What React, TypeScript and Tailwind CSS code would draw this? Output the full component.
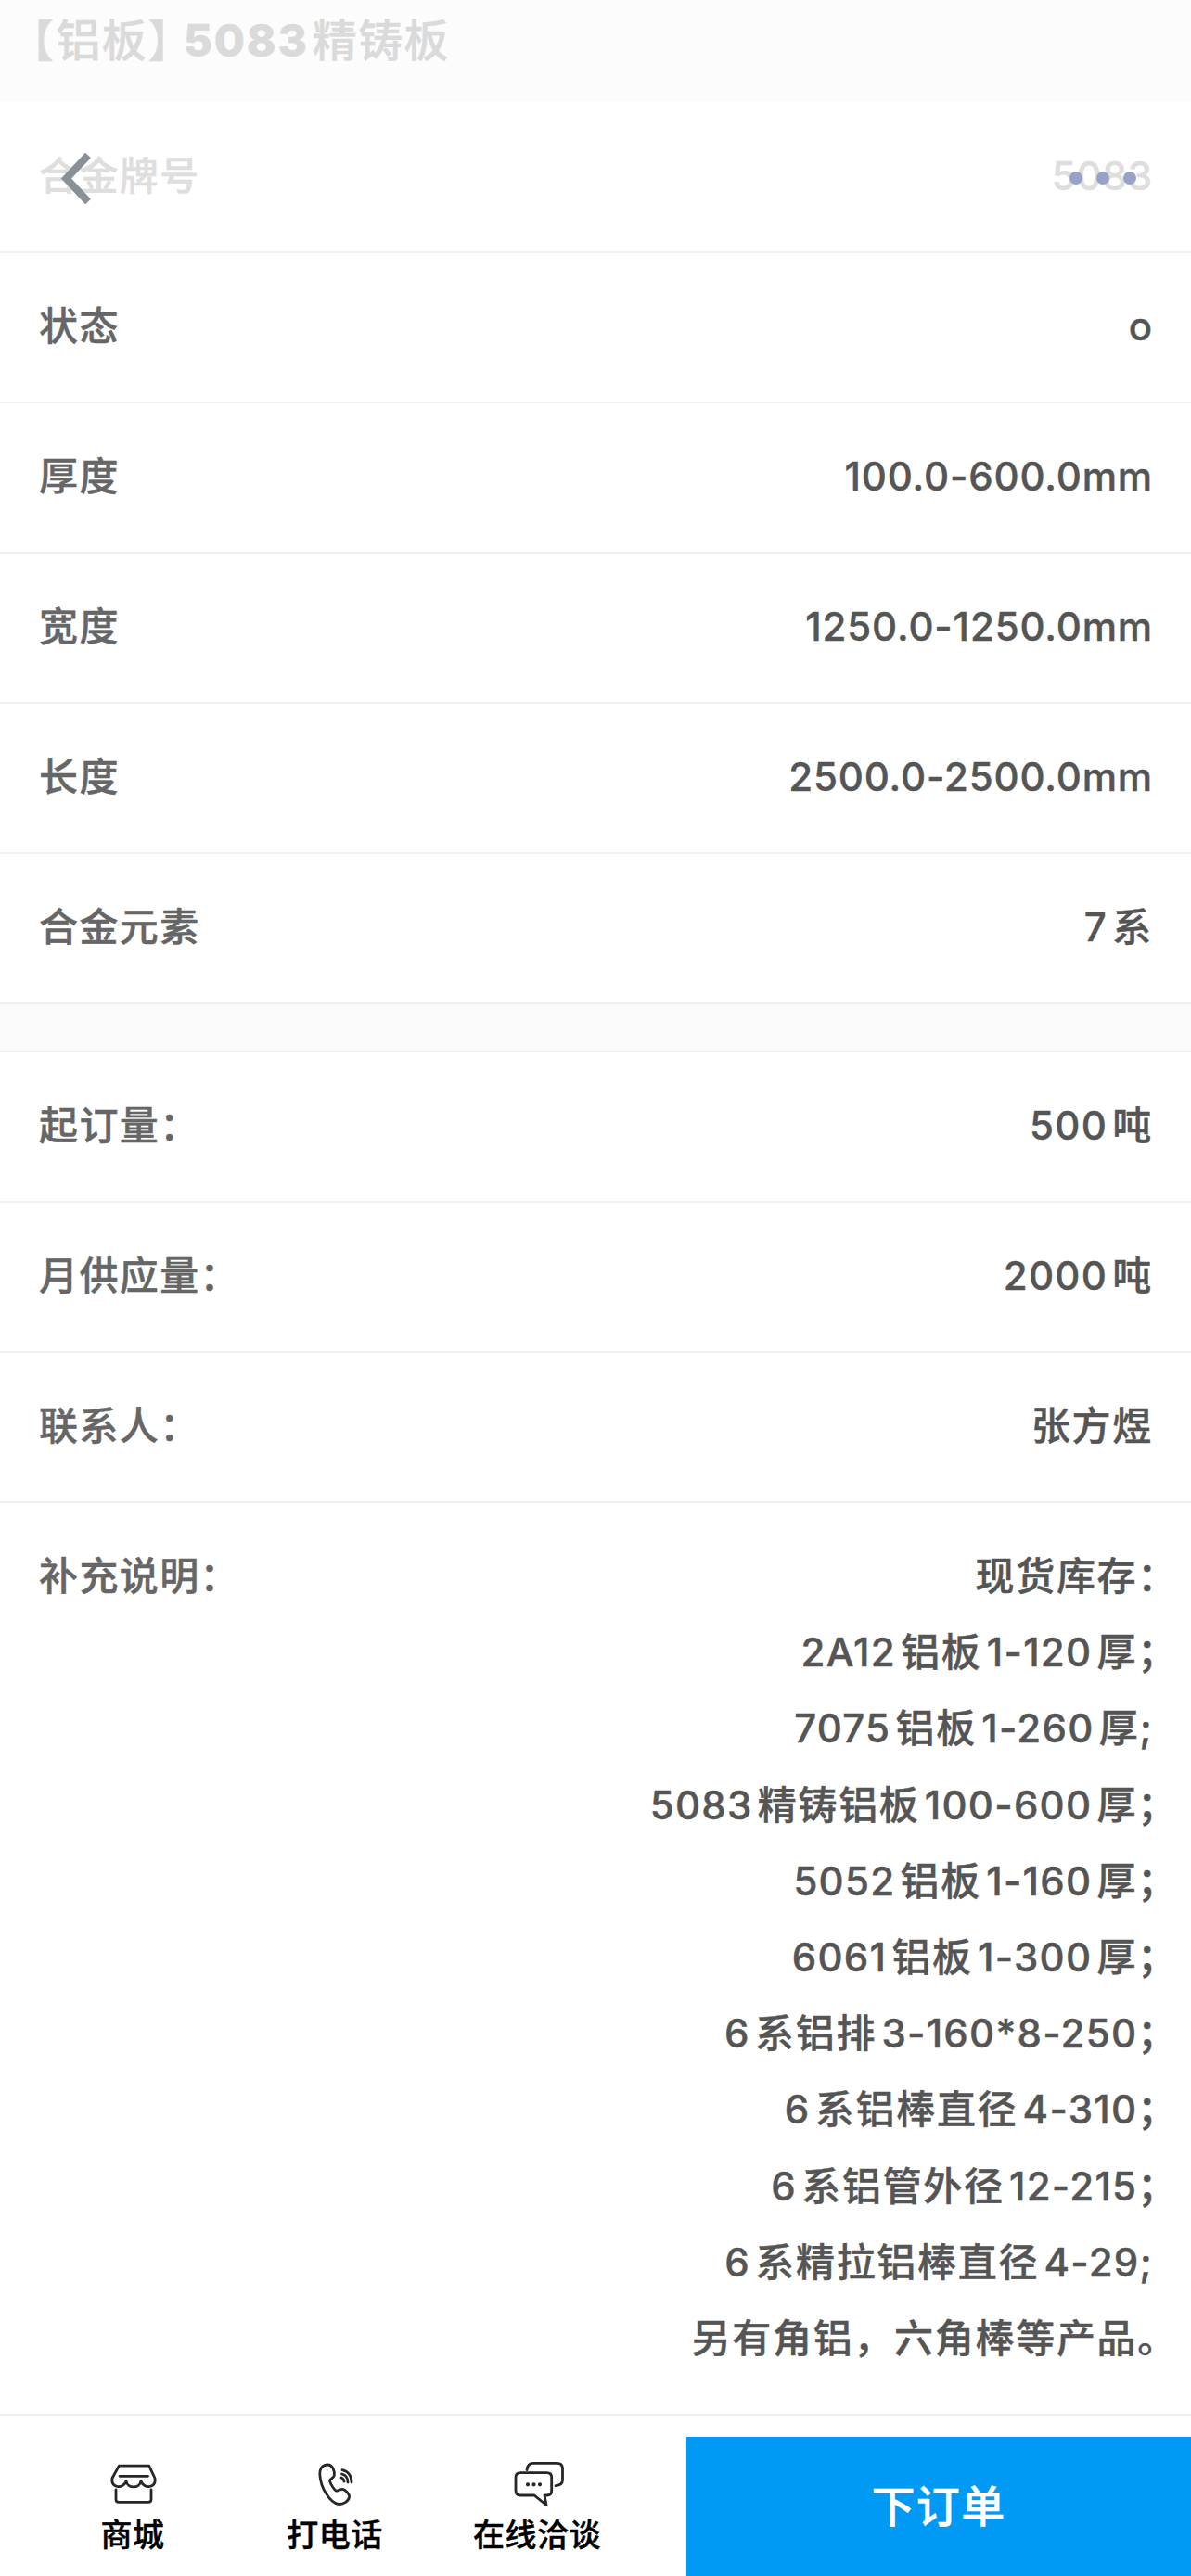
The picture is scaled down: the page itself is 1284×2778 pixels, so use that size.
import { ReactNode } from 'react';

type Spec = { label: string; value: string };

const specs: Spec[] = [
  { label: '状态', value: 'o' },
  { label: '厚度', value: '100.0-600.0mm' },
  { label: '宽度', value: '1250.0-1250.0mm' },
  { label: '长度', value: '2500.0-2500.0mm' },
  { label: '合金元素', value: '7系' },
];

const supply: Spec[] = [
  { label: '起订量：', value: '500吨' },
  { label: '月供应量：', value: '2000吨' },
  { label: '联系人：', value: '张方煜' },
];

const stock = [
  '现货库存：',
  '2A12铝板1-120厚；',
  '7075铝板1-260厚;',
  '5083精铸铝板100-600厚；',
  '5052铝板1-160厚；',
  '6061铝板1-300厚；',
  '6系铝排3-160*8-250；',
  '6系铝棒直径4-310；',
  '6系铝管外径12-215；',
  '6系精拉铝棒直径4-29;',
  '另有角铝，六角棒等产品。',
];

// Latin runs are set a little tighter than the Chinese around them
function MixedText({ text }: { text: string }) {
  const runs = text.match(/[\x20-\x7e]+|[^\x20-\x7e]+/g) ?? [];
  if (runs.length === 1 && /^[\x20-\x7e]/.test(text)) {
    return <span className="tracking-[0.85px]">{text}</span>;
  }
  return (
    <>
      {runs.map((run, i) => (
        <span key={i} className={/^[\x20-\x7e]/.test(run) ? 'tracking-[1.25px]' : 'tracking-[1.7px]'}>
          {run}
        </span>
      ))}
    </>
  );
}

function Row({ label, value }: Spec) {
  return (
    <div className="flex justify-between h-[162px] pt-[38px] pl-[42px] pr-[41px] border-b-2 border-[#f0f0f2]">
      <span className="text-[#666666]">{label}</span>
      <span className="text-[#555555]">
        <MixedText text={value} />
      </span>
    </div>
  );
}

function TabItem({ label, children }: { label: string; children: ReactNode }) {
  return (
    <div className="flex flex-col items-center w-[218px]">
      <svg
        width="60"
        height="56"
        viewBox="0 0 60 56"
        fill="none"
        stroke="#262626"
        strokeWidth="2.8"
        strokeLinecap="round"
        strokeLinejoin="round"
      >
        {children}
      </svg>
      <span className="pt-[3px] text-[34px] leading-[50px] tracking-[0.5px] text-black">{label}</span>
    </div>
  );
}

export default function App() {
  return (
    <div className="relative flex flex-col w-[1284px] h-[2778px] overflow-hidden bg-white font-['Inter','Noto_Sans_CJK_SC',sans-serif] font-medium text-[42px] leading-[82px] tracking-[1.4px] [text-autospace:normal] [-webkit-text-stroke:0.45px] whitespace-nowrap">
      {/* Page title, faded under the translucent nav bar */}
      <div className="flex h-[110px] bg-[#fcfcfc] pt-[3px] pl-[34px] text-[48px] text-[#dadada]">
        <span className="mr-[1px] [font-feature-settings:'halt']">【</span>
        <span>铝板</span>
        <span className="mr-[13px] [font-feature-settings:'halt']">】</span>
        <span className="mr-[4px] font-extrabold tracking-[1.8px]">5083</span>
        <span>精铸板</span>
      </div>
      <div className="flex justify-between h-[163px] pt-[39px] pl-[42px] pr-[41px] border-b-2 border-[#f0f0f2] text-[#dedede]">
        <span>合金牌号</span>
        <MixedText text="5083" />
      </div>

      {specs.map((row) => (
        <Row key={row.label} {...row} />
      ))}
      <div className="h-[52px] bg-[#fafafb] border-b-2 border-[#f0f0f2]" />
      {supply.map((row) => (
        <Row key={row.label} {...row} />
      ))}

      <div className="flex justify-between h-[984px] pt-[38px] pl-[42px] pr-[41px] border-b-2 border-[#f0f0f2]">
        <span className="text-[#666666]">补充说明：</span>
        <div className="flex flex-col items-end leading-[82.2px] text-[#555555]">
          {stock.map((line) => (
            // Full-width end punctuation hangs past the right edge
            <span key={line} className={/[：；。]$/.test(line) ? '-mr-[27px]' : ''}>
              <MixedText text={line} />
            </span>
          ))}
        </div>
      </div>

      {/* Bottom action bar */}
      <div className="flex flex-1 items-end">
        <div className="flex w-[740px] h-[150px] pt-[22px] pl-[34px]">
          <TabItem label="商城">
            <path d="M15.300 9.200H47.700L54 22.500C56 34.500 41 34 39 25.500C37.500 34 24.500 34 23 25.500C21 34 6 34.500 8 22.500Z" />
            <path d="M16 20.300H46.500M12 35V45.500Q12 48.300 15 48.300H47Q50 48.300 50 45.500V35" />
          </TabItem>
          <TabItem label="打电话">
            <path d="M21.500 8C16 8.500 13.500 13 13.800 18.500C14.300 26 16.500 33 20.500 39C24 44.500 28.500 49.500 33.500 50.400C39 51.200 44.500 47.500 45.500 43C46 40 41.500 34.800 38.500 34.300C35.500 34 33.500 37 31 36C28.500 34 25.300 28.500 24.500 25.500C24.500 23 28.500 23 29.300 19.500C30 15.500 28 7.500 21.500 8Z" />
            <path d="M38 13.700C44 15 48 20 48 27M37.500 18C41.500 19 44 22.500 44 27M37 22C39 22.800 40 24 40 26.200" />
          </TabItem>
          <TabItem label="在线洽谈">
            <path d="M12 16.700H40.700Q45.700 16.700 45.700 21.700V36Q45.700 41 40.700 41H38L40 51.500L27 41H12Q7 41 7 36V21.700Q7 16.700 12 16.700Z" />
            <path d="M19 13.500C19.500 9 21.500 6.300 26 6.300H51.500Q57.500 6.300 57.500 12V24.500Q57.500 30 50 30.700" />
            <path d="M20 29.300H20.010M26.500 29.300H26.510M33 29.300H33.010" strokeWidth="4.200" />
          </TabItem>
        </div>
        <button className="flex-1 h-[150px] bg-[#009af5] text-[47px] text-white">下订单</button>
      </div>

      {/* Nav bar controls */}
      <svg className="absolute left-[64px] top-[162px]" width="38" height="60" viewBox="0 0 38 60" fill="none">
        <path d="M31 5.500L7.500 30.500L31 55.500" stroke="#8b9097" strokeWidth="8.200" />
      </svg>
      <div className="absolute left-[1153px] top-[185px] flex gap-[15px]">
        <i className="size-[14px] rounded-full bg-[#97a2c6]" />
        <i className="size-[14px] rounded-full bg-[#97a2c6]" />
        <i className="size-[14px] rounded-full bg-[#97a2c6]" />
      </div>
    </div>
  );
}
